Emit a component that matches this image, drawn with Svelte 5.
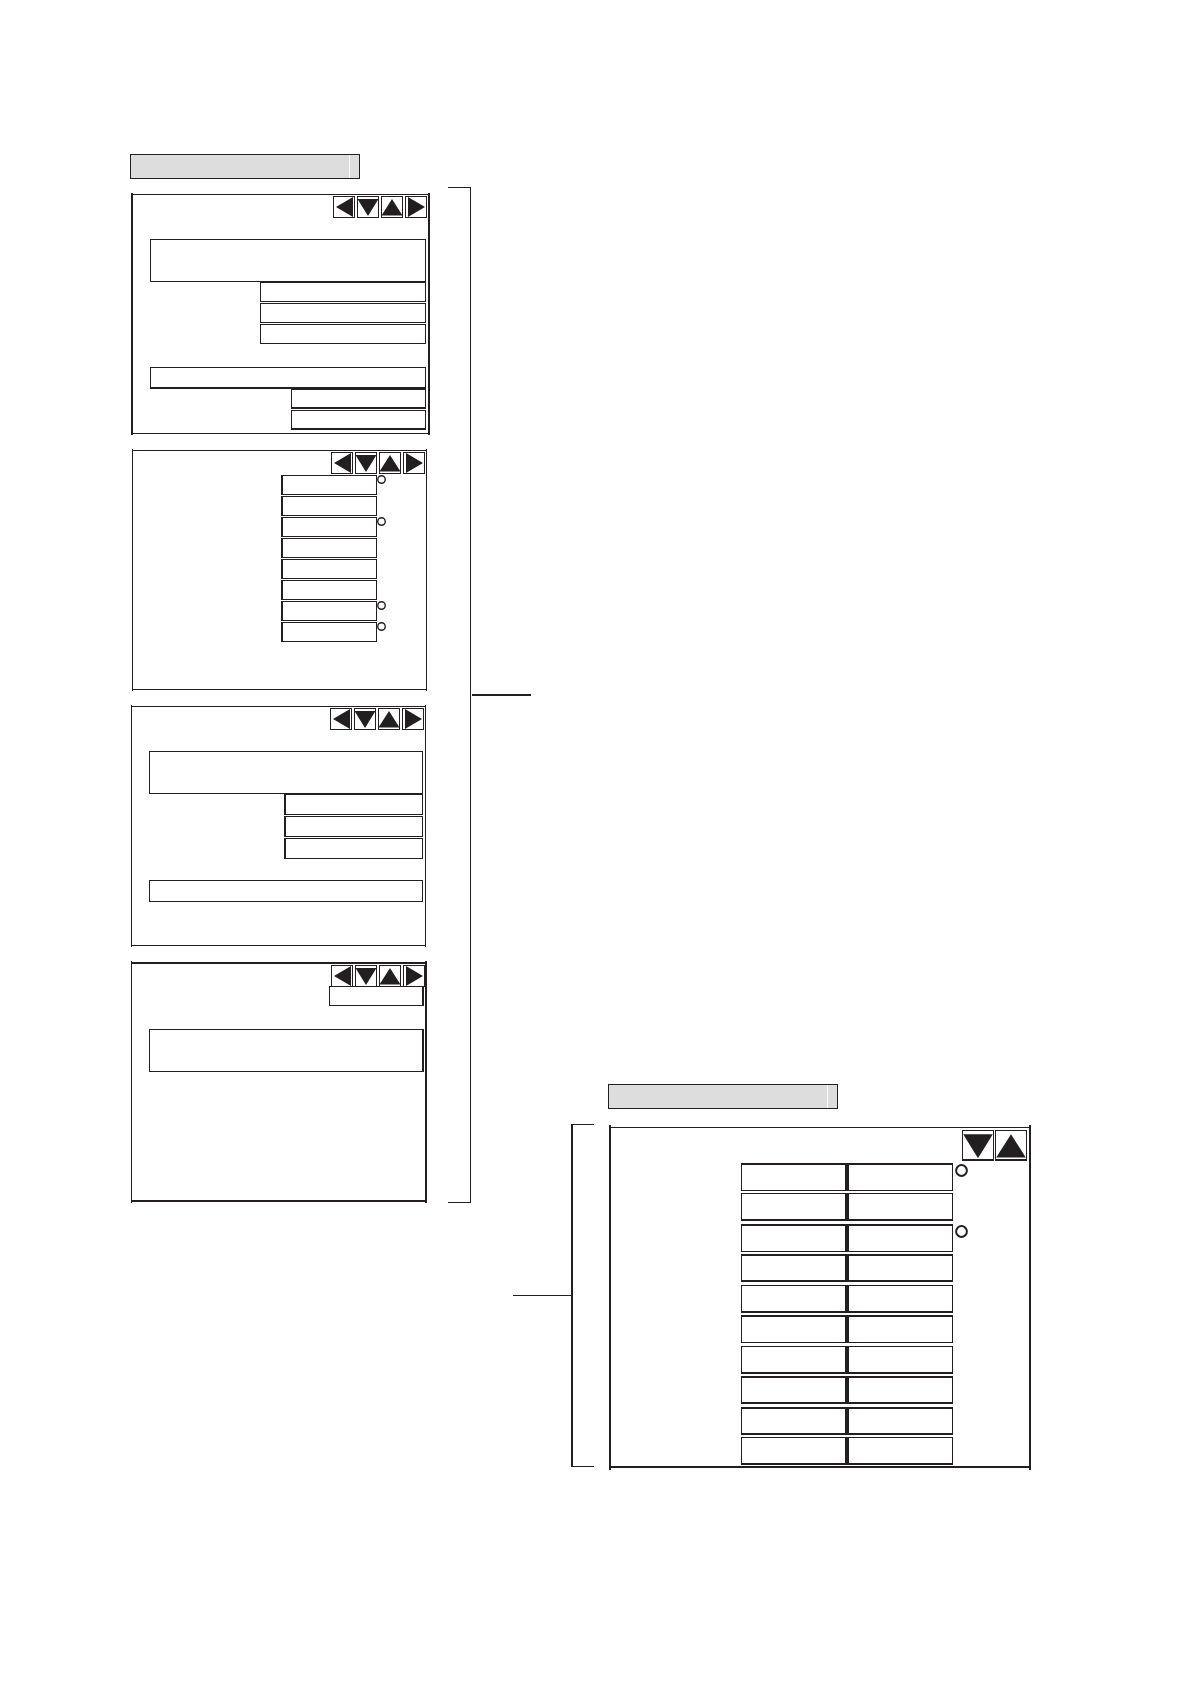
<script lang="ts">
  const shapes = {
    left: "3,11 20,1 20,21",
    down: "0.5,3 21.5,3 11,20",
    up: "11,3 21.5,19.5 0.5,19.5",
    right: "20,11 3,1 3,21"
  }
  const all = ["left", "down", "up", "right"]

  // block = wide text area, fields = stacked values on the right
  const screens = [
    { kind: "first", parts: [
      { tall: true, fields: 3 },
      { tall: false, fields: 2 }
    ]},
    { kind: "list", parts: [] },
    { kind: "third", parts: [
      { tall: true, fields: 3 },
      { tall: false, fields: 0 }
    ]},
    { kind: "last", parts: [
      { tall: true, fields: 0 }
    ]}
  ]

  const marks = [true, false, true, false, false, false, true, true]

  // which edges of the row are heavy
  const rows = [
    { edge: "top", mark: true },
    { edge: "bottom", mark: false },
    { edge: "top", mark: true },
    { edge: "both", mark: false },
    { edge: "bottom", mark: false },
    { edge: "top", mark: false },
    { edge: "bottom", mark: false },
    { edge: "both", mark: false },
    { edge: "both", mark: false },
    { edge: "bottom", mark: false }
  ]
</script>

{#snippet arrows(names)}
  <nav class="arrows">
    {#each names as name}
      <button type="button" aria-label={name}>
        <svg viewBox="0 0 22 22" aria-hidden="true"><polygon points={shapes[name]} /></svg>
      </button>
    {/each}
  </nav>
{/snippet}

{#snippet ring()}
  <svg class="mark" viewBox="0 0 13 13" aria-hidden="true"><circle cx="6.5" cy="6.5" r="5.4" /></svg>
{/snippet}

<main>
  <section class="group left">
    <header class="title"></header>
    <div class="row">
      <div class="screens">
        {#each screens as screen}
          <article class="screen {screen.kind}">
            <div class="inner">
              {@render arrows(all)}
              {#if screen.kind === "list"}
                <div class="values">
                  {#each marks as mark, i}
                    <div class="item">
                      <input type="text" aria-label="Value {i + 1}">
                      {#if mark}{@render ring()}{/if}
                    </div>
                  {/each}
                </div>
              {/if}
              {#if screen.kind === "last"}
                <input class="single" type="text" aria-label="Value">
              {/if}
              {#each screen.parts as part, p}
                <div class="part">
                  <div class="block" class:tall={part.tall}></div>
                  {#if part.fields}
                    <div class="fields">
                      {#each Array(part.fields) as _, i}
                        <input type="text" aria-label="Part {p + 1} value {i + 1}">
                      {/each}
                    </div>
                  {/if}
                </div>
              {/each}
            </div>
          </article>
        {/each}
      </div>
      <div class="bracket"></div>
      <div class="stem"></div>
    </div>
  </section>

  <section class="group right">
    <header class="title"></header>
    <div class="row">
      <div class="link">
        <div class="stem"></div>
        <div class="bracket"></div>
      </div>
      <article class="screen big">
        <div class="inner">
          {@render arrows(["down", "up"])}
          <div class="pairs">
            {#each rows as row, i}
              <div class="pair {row.edge}">
                <input type="text" aria-label="Row {i + 1} first value">
                <input type="text" aria-label="Row {i + 1} second value">
                {#if row.mark}{@render ring()}{/if}
              </div>
            {/each}
          </div>
        </div>
      </article>
    </div>
  </section>
</main>

<style>
  :global(body) {
    margin: 0;
    background: #fff;
  }

  main {
    --ink: #231f20;
    display: grid;
    grid-template-columns: 130fr 383fr 18fr 500fr 160fr;
    padding: 154px 0 214px;
    font-family: "Liberation Sans", sans-serif;
    font-size: 12px;
    color: var(--ink);
  }

  main * {
    box-sizing: border-box;
  }

  .group {
    grid-row: 1;
  }

  .left {
    grid-column: 2 / 4;
  }

  .right {
    grid-column: 3 / 5;
    margin-top: 930px;
  }

  .title {
    width: 230px;
    height: 25px;
    border: 1px solid var(--ink);
    background: linear-gradient(#fff, #fff) right 9px top / 1px 100% no-repeat #ddd;
  }

  .right .title {
    margin-left: 95px;
  }

  .row {
    display: flex;
  }

  .left .row {
    margin: 8px 0 0 1px;
  }

  .right .row {
    margin-top: 15px;
  }

  .screens {
    flex: 1;
    display: flex;
    flex-direction: column;
    gap: 14px;
    padding-top: 6px;
  }

  /* side rules run a little past the top and bottom ones */
  .screen {
    min-height: 242px;
    display: flex;
    padding: 1px 0;
    border: solid var(--ink);
    border-width: 0 1px;
  }

  .inner {
    flex: 1;
    display: flex;
    flex-direction: column;
    padding: 1px 1px 1px 2px;
    border: solid var(--ink);
    border-width: 1px 0;
  }

  .first {
    border-width: 0 2px;
  }

  .list {
    margin: 0 3px 0 1px;
  }

  .third {
    margin-right: 4px;
  }

  .last {
    margin-right: 3px;
    border-right-width: 2px;
  }

  .list,
  .third {
    padding-bottom: 1px;
  }

  .last .inner {
    padding: 1px 0 0 2px;
    border-width: 2px 0;
  }

  .arrows {
    display: flex;
    align-self: flex-end;
    gap: 2px;
  }

  button {
    width: 22px;
    height: 22px;
    padding: 0;
    border: 1px solid var(--ink);
    border-radius: 0;
    background: #fff;
  }

  button svg {
    display: block;
    width: 22px;
    height: 22px;
    margin: -1px;
    fill: var(--ink);
  }

  input {
    min-width: 0;
    height: 20px;
    margin: 0;
    padding: 0 4px;
    border: 1px solid var(--ink);
    border-radius: 0;
    background: #fff;
    font: inherit;
    color: inherit;
  }

  .part {
    display: flex;
    flex-direction: column;
    margin: 21px 1px 0 15px;
  }

  .first .part + .part,
  .last .part {
    margin-top: 23px;
  }

  .block {
    height: 22px;
    border: 1px solid var(--ink);
  }

  .tall {
    height: 43px;
  }

  .fields {
    align-self: flex-end;
    display: flex;
    flex-direction: column;
    gap: 1px;
    width: 60%;
  }

  .third .fields {
    width: 139px;
  }

  .third .fields input {
    height: 21px;
    border-left-width: 2px;
  }

  .first .part:last-child .fields {
    width: 49%;
  }

  .first .part:last-child .block,
  .first .part:last-child input {
    border-bottom-width: 2px;
  }

  .single {
    align-self: flex-end;
    width: 95px;
    margin: -1px 1px 0 0;
    border-right-width: 2px;
  }

  .last .block {
    border-right-width: 2px;
  }

  .values {
    display: flex;
    flex-direction: column;
    gap: 1px;
    width: 105px;
    margin: 1px 39px 0 auto;
  }

  .item {
    display: flex;
  }

  .item input {
    width: 96px;
    border-left-width: 2px;
  }

  .mark {
    flex: none;
    width: 9px;
    height: 9px;
    fill: #fff;
    stroke: var(--ink);
    stroke-width: 2;
  }

  .left .bracket {
    width: 23px;
    margin-left: 18px;
    border: solid var(--ink);
    border-width: 1px 1px 1px 0;
  }

  .left .stem {
    align-self: center;
    width: 59px;
    height: 2px;
    margin-left: 1px;
    background: var(--ink);
  }

  .link {
    display: flex;
    padding-bottom: 3px;
  }

  .right .bracket {
    width: 23px;
    margin-right: 15px;
    border: solid var(--ink);
    border-width: 1px 0 1px 2px;
  }

  .right .stem {
    align-self: center;
    width: 58px;
    height: 1px;
    background: var(--ink);
  }

  .big {
    flex: 1;
    min-height: 345px;
    margin-top: 1px;
    padding: 2px 0;
    border-width: 0 2px;
  }

  .big .inner {
    padding: 2px 2px 1px;
    border-bottom-width: 2px;
  }

  .big .arrows {
    gap: 1px;
  }

  .big button {
    width: 32px;
    height: 31px;
    border-bottom-width: 2px;
  }

  .big svg {
    width: 32px;
    height: 31px;
  }

  .pairs {
    flex: 1;
    display: flex;
    flex-direction: column;
    justify-content: space-between;
    width: 227px;
    margin: 2px 59px 0 auto;
  }

  .pair {
    display: flex;
  }

  .pair input {
    width: 106px;
    height: 28px;
  }

  .pair input:first-child {
    border-right-width: 2px;
  }

  .pair input:nth-child(2) {
    border-left-width: 2px;
  }

  .top input,
  .both input {
    border-top-width: 2px;
  }

  .bottom input,
  .both input {
    border-bottom-width: 2px;
  }

  .pair .mark {
    width: 13px;
    height: 13px;
    margin: 1px 0 0 2px;
  }
</style>
